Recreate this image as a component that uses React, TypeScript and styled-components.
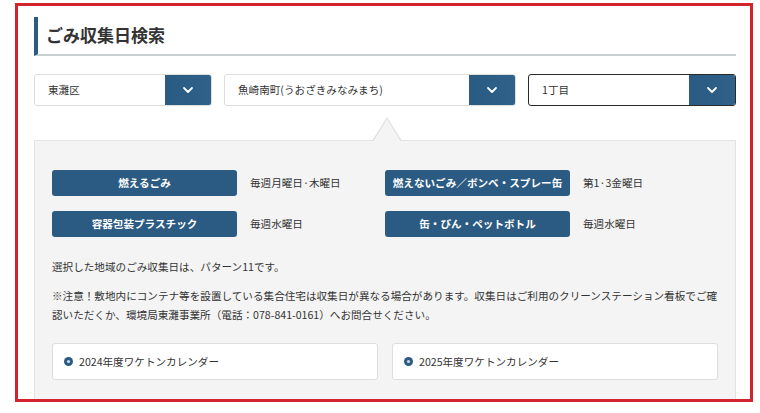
import React from "react";
import styled, { createGlobalStyle } from "styled-components";

const GlobalStyle = createGlobalStyle`
  html, body { margin: 0; padding: 0; background: #ffffff; }
  body {
    font-family: "Noto Sans CJK JP", "Noto Sans", sans-serif;
    color: #333333;
    font-size: 10.6px;
  }
  * { box-sizing: border-box; }
`;

const Page = styled.div`
  padding: 3px 0 0 15px;
`;

const Frame = styled.section`
  width: 738px;
  height: 399px;
  border: 3px solid #d3232d;
  overflow: hidden;
  padding: 11px 14px 0 16px;
  background: #ffffff;
`;

const Title = styled.h2`
  margin: 0;
  height: 39px;
  border-left: 4px solid #2b5b82;
  border-bottom: 2px solid #c9d1d3;
  padding-left: 8px;
  font-size: 17px;
  font-weight: 700;
  line-height: 36px;
  color: #333333;
`;

const SelectRow = styled.div`
  display: flex;
  gap: 12px;
  margin-top: 18px;
`;

const Select = styled.div<{ $w: number; $active?: boolean }>`
  width: ${(p) => p.$w}px;
  height: 32px;
  display: flex;
  border: 1px solid ${(p) => (p.$active ? "#2a2a2a" : "#dddddd")};
  border-radius: 3px;
  background: #ffffff;
  overflow: hidden;
`;

const SelectText = styled.div`
  flex: 1;
  padding-left: 13px;
  line-height: 30px;
  font-size: 10.6px;
  color: #333333;
  white-space: nowrap;
`;

const SelectButton = styled.div`
  width: 46px;
  background: linear-gradient(90deg, #2a5b82, #2f6189);
  display: flex;
  align-items: center;
  justify-content: center;
`;

const Panel = styled.div`
  position: relative;
  margin-top: 34px;
  background: #f4f4f4;
  border: 1px solid #e3e3e3;
  padding: 29px 17px 40px;

  &::before {
    content: "";
    position: absolute;
    top: -24px;
    left: 337px;
    border-left: 15px solid transparent;
    border-right: 15px solid transparent;
    border-bottom: 24px solid #e0e0e0;
  }
  &::after {
    content: "";
    position: absolute;
    top: -22px;
    left: 338px;
    border-left: 14px solid transparent;
    border-right: 14px solid transparent;
    border-bottom: 23px solid #f4f4f4;
  }
`;

const Schedule = styled.div`
  display: grid;
  grid-template-columns: 333px 1fr;
  row-gap: 15px;
`;

const Item = styled.div`
  display: flex;
  gap: 13px;
  align-items: center;
`;

const Label = styled.div`
  width: 185px;
  height: 26px;
  border-radius: 3px;
  background: #2b5b82;
  color: #ffffff;
  font-weight: 700;
  font-size: 10.6px;
  line-height: 26px;
  text-align: center;
  white-space: nowrap;
`;

const Value = styled.div`
  font-size: 10.6px;
  line-height: 26px;
  color: #333333;
`;

const Pattern = styled.p`
  margin: 20px 0 0;
  line-height: 20px;
`;

const Note = styled.p`
  margin: 9px 0 0;
  line-height: 19px;
`;

const Calendars = styled.div`
  display: grid;
  grid-template-columns: 326px 326px;
  column-gap: 14px;
  margin-top: 19px;
`;

const CalendarLink = styled.a`
  display: flex;
  align-items: center;
  gap: 6px;
  height: 37px;
  padding-left: 11px;
  background: #ffffff;
  border: 1px solid #dedede;
  border-radius: 3px;
  color: #333333;
  text-decoration: none;
  font-size: 10.6px;
`;

const Chevron = () => (
  <svg width="12" height="8" viewBox="0 0 12 8">
    <path d="M2 2 L6 6 L10 2" fill="none" stroke="#ffffff" strokeWidth="1.8" strokeLinecap="round" strokeLinejoin="round" />
  </svg>
);

const CircleIcon = () => (
  <svg width="9" height="9" viewBox="0 0 9 9">
    <circle cx="4.5" cy="4.5" r="4.5" fill="#2b5b82" />
    <circle cx="4.5" cy="4.5" r="1.6" fill="#cfd9e2" />
  </svg>
);

const schedule = [
  { label: "燃えるごみ", value: "毎週月曜日·木曜日" },
  { label: "燃えないごみ／ボンベ・スプレー缶", value: "第1·3金曜日" },
  { label: "容器包装プラスチック", value: "毎週水曜日" },
  { label: "缶・びん・ペットボトル", value: "毎週水曜日" },
];

export default function App() {
  return (
    <Page>
      <GlobalStyle />
      <Frame>
        <Title>ごみ収集日検索</Title>
        <SelectRow>
          <Select $w={178}>
            <SelectText>東灘区</SelectText>
            <SelectButton><Chevron /></SelectButton>
          </Select>
          <Select $w={292}>
            <SelectText>魚崎南町(うおざきみなみまち)</SelectText>
            <SelectButton><Chevron /></SelectButton>
          </Select>
          <Select $w={208} $active>
            <SelectText>1丁目</SelectText>
            <SelectButton><Chevron /></SelectButton>
          </Select>
        </SelectRow>
        <Panel>
          <Schedule>
            {schedule.map((s) => (
              <Item key={s.label}>
                <Label>{s.label}</Label>
                <Value>{s.value}</Value>
              </Item>
            ))}
          </Schedule>
          <Pattern>選択した地域のごみ収集日は、パターン11です。</Pattern>
          <Note>
            ※注意！敷地内にコンテナ等を設置している集合住宅は収集日が異なる場合があります。収集日はご利用のクリーンステーション看板でご確認いただくか、環境局東灘事業所（電話：078-841-0161）へお問合せください。
          </Note>
          <Calendars>
            <CalendarLink href="#">
              <CircleIcon />
              2024年度ワケトンカレンダー
            </CalendarLink>
            <CalendarLink href="#">
              <CircleIcon />
              2025年度ワケトンカレンダー
            </CalendarLink>
          </Calendars>
        </Panel>
      </Frame>
    </Page>
  );
}
